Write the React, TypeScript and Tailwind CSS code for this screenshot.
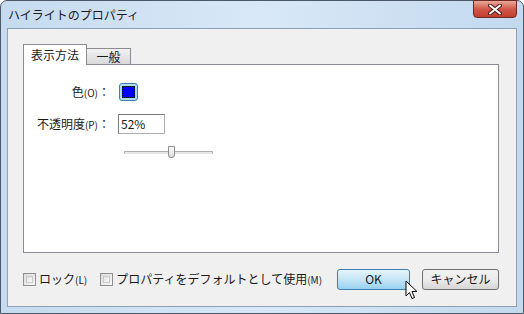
import React from "react";

const font = { fontFamily: '"Noto Sans CJK JP", "Noto Sans", sans-serif' };

function Checkbox() {
  return (
    <span className="w-[13px] h-[13px] border border-[#8f8f8f] bg-gradient-to-br from-[#dcdcdc] to-[#f7f7f7] p-[2px] flex">
      <span className="flex-1 border border-[#c9c9c9] bg-gradient-to-br from-[#e2e2e2] to-[#fafafa]" />
    </span>
  );
}

function Cursor() {
  return (
    <svg width="16" height="22" viewBox="0 0 16 22" className="absolute left-[405px] top-[280px]">
      <path d="M1 1 L1 16 L4.5 12.5 L7 18.5 L9.5 17.5 L7 11.5 L12 11.5 Z" fill="white" stroke="black" strokeWidth="1" strokeLinejoin="round" />
    </svg>
  );
}

export default function App() {
  return (
    <div className="relative w-[524px] h-[314px] overflow-hidden" style={font}>
      <div className="w-full h-full flex flex-col rounded-t-[7px] border border-[#4a5868] bg-gradient-to-r from-[#c6dbef] via-[#d8e8f7] to-[#c3d9ee] px-[6px] pb-[6px]">
        {/* title bar */}
        <div className="h-[27px] flex items-start justify-between">
          <span className="text-[12px] text-[#1a1a1a] mt-[5px] ml-[1px] leading-[18px]">ハイライトのプロパティ</span>
          <button className="w-[44px] h-[18px] -mt-px rounded-b-[4px] border border-[#6c2a22] bg-gradient-to-b from-[#e8a89a] via-[#d1574a] to-[#c43e2f] flex items-center justify-center">
            <svg width="14" height="11" viewBox="0 0 14 11">
              <path d="M2 1.5 L12 9.5 M12 1.5 L2 9.5" stroke="#4a1a14" strokeWidth="4" strokeLinecap="round" />
              <path d="M2 1.5 L12 9.5 M12 1.5 L2 9.5" stroke="white" strokeWidth="2" strokeLinecap="round" />
            </svg>
          </button>
        </div>

        {/* client area */}
        <div className="flex-1 border border-[#8ea0b6] bg-[#f0f0f0] flex flex-col pl-[15px] pr-[17px] pt-[14px] text-[12px] text-[#1a1a1a]">
          {/* tabs */}
          <div className="flex items-end h-[21px]">
            <div className="h-[21px] w-[64px] border border-b-0 border-[#898c95] bg-white flex items-center justify-center text-[12px] relative top-px z-10">
              表示方法
            </div>
            <div className="h-[16px] w-[44px] border border-l-0 border-b-0 border-[#898c95] bg-gradient-to-b from-[#f2f2f2] to-[#d9d9d9] flex justify-center text-[12px]">
              <span className="leading-[12px] mt-[2px]">一般</span>
            </div>
          </div>
          {/* panel */}
          <div className="h-[189px] border border-[#898c95] bg-white flex flex-col">
            <div className="flex items-center mt-[17px] h-[19px]">
              <span className="w-[86px] text-right">
                色<span className="text-[10px]">(O)</span>：
              </span>
              <span className="ml-[9px] w-[19px] h-[18px] rounded-[3px] border border-[#3c7fb1] bg-[#aedcf5] p-[2px] flex">
                <span className="flex-1 border border-dotted border-black bg-[#0000ff]" />
              </span>
            </div>
            <div className="flex items-center mt-[13px] h-[20px]">
              <span className="w-[86px] text-right">
                不透明度<span className="text-[10px]">(P)</span>：
              </span>
              <span className="ml-[8px] w-[47px] h-[20px] border border-[#abadb3] border-t-[#7a7a7a] border-l-[#7a7a7a] px-[2px] flex items-center text-[12px] leading-none">
                52%
              </span>
            </div>
            <div className="flex items-center mt-[12px] h-[12px] ml-[100px] w-[89px] relative">
              <span className="w-full h-[3px] border border-[#b0b0b0] border-b-[#e6e6e6] bg-[#e8e8e8]" />
              <span className="absolute left-[44px] top-0 w-[7px] h-[12px] rounded-b-[3px] border border-[#8c8c8c] bg-gradient-to-b from-[#fbfbfb] to-[#dcdcdc]" />
            </div>
          </div>
          {/* bottom row */}
          <div className="flex items-center mt-[16px] h-[20px]">
            <Checkbox />
            <span className="ml-[3px]">
              ロック<span className="text-[10px]">(L)</span>
            </span>
            <span className="ml-[13px]">
              <Checkbox />
            </span>
            <span className="ml-[3px]">
              プロパティをデフォルトとして使用<span className="text-[10px]">(M)</span>
            </span>
            <button className="ml-auto w-[73px] h-[21px] rounded-[3px] border border-[#3c7fb1] bg-gradient-to-b from-[#e5f4fc] via-[#c4e5f6] to-[#98d1ef] text-[12px] leading-none">
              OK
            </button>
            <button className="ml-[12px] w-[77px] h-[21px] rounded-[3px] border border-[#707070] bg-gradient-to-b from-[#f2f2f2] via-[#ebebeb] to-[#d6d6d6] text-[12px] leading-none">
              キャンセル
            </button>
          </div>
        </div>
      </div>
      <Cursor />
    </div>
  );
}
